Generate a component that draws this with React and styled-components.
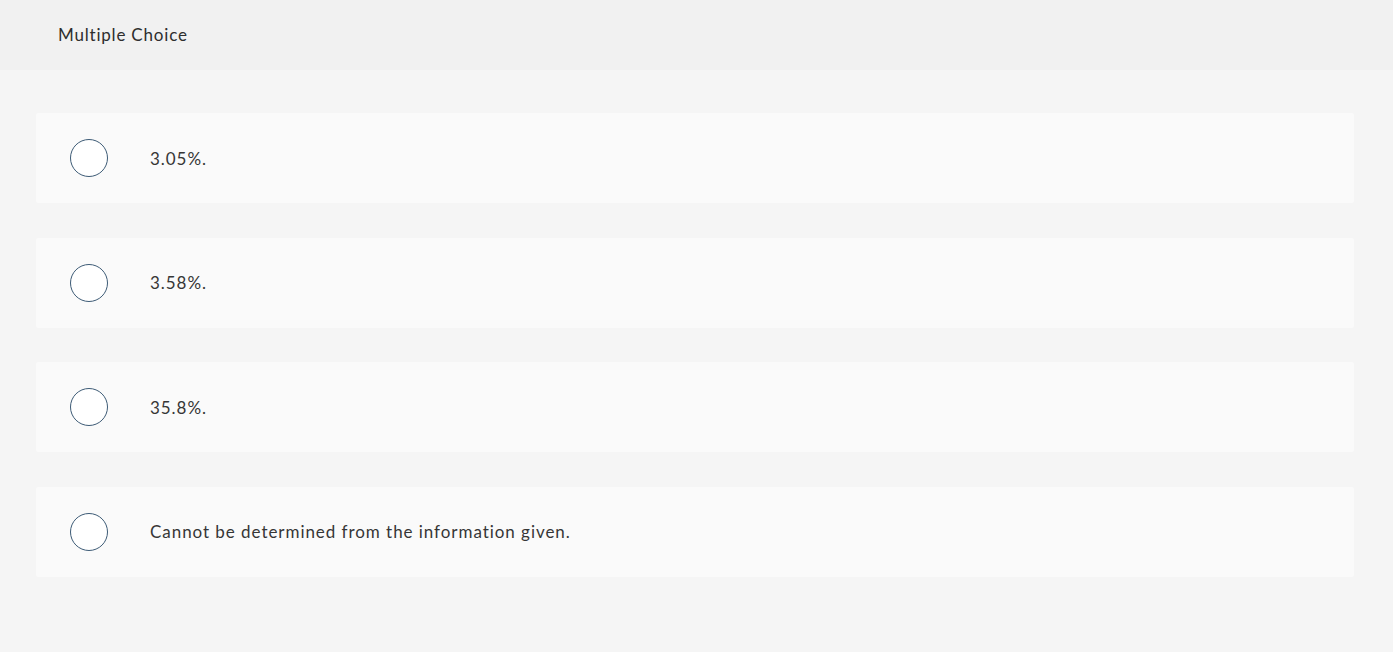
import styled, { createGlobalStyle } from "styled-components";

const options = [
    "3.05%.",
    "3.58%.",
    "35.8%.",
    "Cannot be determined from the information given.",
];

function App() {
    return (
        <>
            <GlobalStyle />
            <Page>
                <Header>
                    <HeaderTitle>Multiple Choice</HeaderTitle>
                </Header>
                <Choices>
                    {options.map((text, index) => (
                        <Choice key={index}>
                            <Radio />
                            <Label>{text}</Label>
                        </Choice>
                    ))}
                </Choices>
            </Page>
        </>
    );
}

const GlobalStyle = createGlobalStyle`
    html, body {
        margin: 0;
        padding: 0;
        background: #f5f5f5;
    }
    body {
        font-family: Lato, "Open Sans", sans-serif;
        color: #333333;
    }
`
const Page = styled.div`
    width: 1393px;
    min-height: 652px;
    background: #f5f5f5;
`
const Header = styled.div`
    height: 70px;
    background: #f1f1f1;
    display: flex;
    align-items: center;
    padding-left: 58px;
    box-sizing: border-box;
`
const HeaderTitle = styled.h1`
    margin: 0 0 1px 0;
    font-size: 17px;
    font-weight: 400;
    color: #2e2e2e;
    letter-spacing: 0.8px;
`
const Choices = styled.div`
    display: flex;
    flex-direction: column;
    gap: 34.5px;
    padding: 43px 39px 0 36px;
`
const Choice = styled.div`
    height: 90px;
    background: #fafafa;
    display: flex;
    align-items: center;
    padding-left: 34px;
    box-sizing: border-box;
    border-radius: 2px;
`
const Radio = styled.span`
    width: 38px;
    height: 38px;
    box-sizing: border-box;
    border: 1px solid #3d5b76;
    border-radius: 50%;
    background: #ffffff;
    flex-shrink: 0;
`
const Label = styled.span`
    margin-left: 42px;
    font-size: 17px;
    color: #363636;
    letter-spacing: 0.95px;
`

export default App;
